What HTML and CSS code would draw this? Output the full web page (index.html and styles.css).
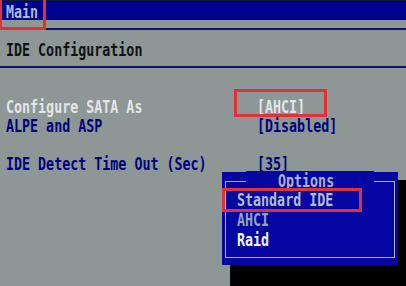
FILE: index.html
```html
<!DOCTYPE html>
<html>
<head>
    <title>BIOS - IDE Configuration</title>
    <link rel="stylesheet" href="styles.css">
</head>
<body>
    <div class="screen">
        <div class="topbar">
            <div class="tab marked-tab"><span class="txt">Main</span></div>
        </div>
        <div class="rule"></div>
        <div class="section"><span class="txt">IDE Configuration</span></div>
        <div class="rule rule-low"></div>

        <div class="settings">
            <div class="row selected">
                <div class="label"><span class="txt">Configure SATA As</span></div>
                <div class="value marked-value"><span class="txt">[AHCI]</span></div>
            </div>
            <div class="row">
                <div class="label"><span class="txt">ALPE and ASP</span></div>
                <div class="value"><span class="txt">[Disabled]</span></div>
            </div>
            <div class="row"></div>
            <div class="row">
                <div class="label"><span class="txt">IDE Detect Time Out (Sec)</span></div>
                <div class="value"><span class="txt">[35]</span></div>
            </div>
        </div>

        <div class="popup">
            <div class="frame">
                <div class="popup-title"><span class="txt">Options</span></div>
                <div class="item marked-item"><span class="txt">Standard IDE</span></div>
                <div class="item dim"><span class="txt">AHCI</span></div>
                <div class="item active"><span class="txt">Raid</span></div>
            </div>
        </div>
    </div>
</body>
</html>
```

FILE: styles.css
```css
body {
    margin: 0;
    background: #8d9795;
    font-family: "DejaVu Sans Mono", monospace;
    font-size: 13.33px;
    font-weight: bold;
    line-height: 19px;
    overflow: hidden;
}

.screen {
    position: relative;
    width: 406px;
    height: 286px;
}

/* bios font is tall and narrow */
.txt {
    display: inline-block;
    transform: scaleY(1.26);
    transform-origin: 0 0;
    white-space: pre;
}

.topbar {
    height: 20px;
    background: #00008e;
    box-shadow: inset 0 1px #15153c;
}

.tab {
    position: relative;
    display: inline-block;
    padding-left: 6px;
    color: #a9bde0;
}

.marked-tab::after {
    content: "";
    position: absolute;
    left: -1px;
    top: -3px;
    width: 47px;
    height: 33px;
    border: 3px solid #e0303a;
    box-sizing: border-box;
}

.rule {
    height: 2px;
    margin-top: 8px;
    background: #14146e;
}

.rule-low {
    margin-top: 9px;
}

.section {
    margin-top: 8px;
    padding-left: 6px;
    color: #111111;
}

.settings {
    margin-top: 27px;
    padding-left: 6px;
}

.row {
    display: grid;
    grid-template-columns: 251px auto;
    height: 19px;
    color: #00007c;
}

.row.selected .label {
    color: #e2e6e8;
}

.value {
    position: relative;
}

.marked-value {
    color: #e2e6e8;
}

.marked-value::after {
    content: "";
    position: absolute;
    left: -23px;
    top: -6px;
    width: 93px;
    height: 28px;
    border: 3px solid #e0303a;
    box-sizing: border-box;
}

.popup {
    position: absolute;
    left: 222px;
    top: 172px;
    width: 176px;
    height: 93px;
    background: #0606a2;
    box-shadow: 8px 8px 0 #000, 8px 30px 0 #000;
}

.frame {
    margin: 9px 3px 0;
    height: 77px;
    box-sizing: border-box;
    border: 1px solid #aab2cc;
}

.popup-title {
    width: fit-content;
    margin: -11px 0 0 20px;
    padding: 0 40px 0 32px;
    line-height: 17px;
    background: #0606a2;
    color: #a8b2cc;
}

.item {
    position: relative;
    padding-left: 11px;
    line-height: 20px;
    height: 20px;
    color: #b4bccc;
}

.item.dim {
    color: #98a2bc;
}

.item.active {
    color: #f4f4f4;
}

.marked-item::after {
    content: "";
    position: absolute;
    left: -4px;
    top: 0;
    width: 140px;
    height: 24px;
    border: 3px solid #e0303a;
    box-sizing: border-box;
}
```
